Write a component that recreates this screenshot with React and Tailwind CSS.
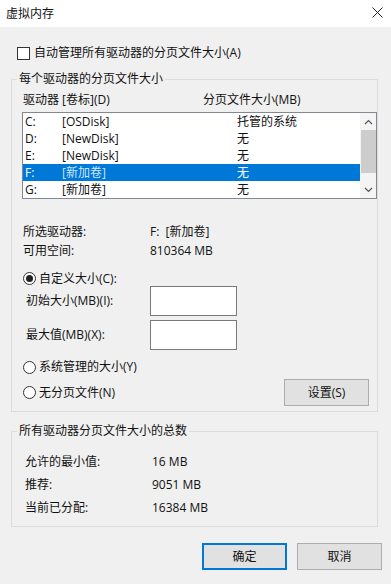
import React from 'react';

const drives = [
  { letter: 'C:', label: '[OSDisk]', size: '托管的系统' },
  { letter: 'D:', label: '[NewDisk]', size: '无' },
  { letter: 'E:', label: '[NewDisk]', size: '无' },
  { letter: 'F:', label: '[新加卷]', size: '无', selected: true },
  { letter: 'G:', label: '[新加卷]', size: '无' },
];

const Radio = ({ checked, label }) => (
  <div className="flex items-center h-[16px] ml-[1px]">
    <span className="w-[13px] h-[13px] rounded-full border border-[#333] bg-white flex items-center justify-center">
      {checked && <span className="w-[7px] h-[7px] rounded-full bg-[#222]" />}
    </span>
    <span className="ml-[3px]">{label}</span>
  </div>
);

const WinButton = ({ children, primary }) => (
  <button
    className={
      primary
        ? 'w-[85px] h-[27px] bg-[#e1e1e1] border-2 border-[#0078d7] flex items-center justify-center'
        : 'w-[85px] h-[27px] bg-[#e1e1e1] border border-[#adadad] flex items-center justify-center'
    }
  >
    {children}
  </button>
);

const App = () => {
  return (
    <div
      className="w-[391px] h-[584px] bg-[#f0f0f0] text-[12px] leading-[16px] text-[#111] overflow-hidden"
      style={{ fontFamily: '"Open Sans","Noto Sans CJK SC",sans-serif' }}
    >
      {/* title bar */}
      <div className="h-[27px] bg-white flex items-center justify-between pl-[6px] pr-[8px]">
        <span>虚拟内存</span>
        <svg width="11" height="11" viewBox="0 0 11 11" className="mt-[-2px]">
          <path d="M0.5 0.5 L10.5 10.5 M10.5 0.5 L0.5 10.5" stroke="#222" strokeWidth="1" fill="none" />
        </svg>
      </div>

      <div className="pl-[11px] pr-[13px]">
        {/* auto manage checkbox */}
        <div className="flex items-center h-[14px] mt-[19px] ml-[6px]">
          <span className="w-[13px] h-[13px] border border-[#333] bg-white" />
          <span className="ml-[4px]">自动管理所有驱动器的分页文件大小(A)</span>
        </div>

        {/* per-drive group */}
        <fieldset className="mt-[11px] border border-[#dcdcdc] pb-[5px] min-w-0">
          <legend className="ml-[5px] px-[2px] leading-[16px]">每个驱动器的分页文件大小</legend>
          <div className="pl-[10px]">
            <div className="flex mt-[5px] ml-[1px]">
              <span className="w-[180px]">驱动器 [卷标](D)</span>
              <span>分页文件大小(MB)</span>
            </div>

            <div className="mt-[4px] w-[355px] h-[87px] border border-[#828790] bg-white flex">
              <div className="flex-1">
                {drives.map((d) => (
                  <div
                    key={d.letter}
                    className={
                      d.selected
                        ? 'flex h-[17px] items-center bg-[#0078d7] text-white pl-[2px]'
                        : 'flex h-[17px] items-center pl-[2px]'
                    }
                  >
                    <span className="w-[37px]">{d.letter}</span>
                    <span className={d.selected ? 'w-[175px] text-[#cfe6ff]' : 'w-[175px]'}>{d.label}</span>
                    <span>{d.size}</span>
                  </div>
                ))}
              </div>
              <div className="w-[16px] bg-[#f4f4f4] flex flex-col items-center">
                <div className="h-[17px] flex items-center justify-center">
                  <svg width="9" height="6" viewBox="0 0 9 6">
                    <path d="M1 5 L4.5 1.5 L8 5" stroke="#555" strokeWidth="1.2" fill="none" />
                  </svg>
                </div>
                <div className="w-[15px] h-[43px] bg-[#cdcdcd]" />
                <div className="flex-1" />
                <div className="h-[17px] flex items-center justify-center">
                  <svg width="9" height="6" viewBox="0 0 9 6">
                    <path d="M1 1 L4.5 4.5 L8 1" stroke="#555" strokeWidth="1.2" fill="none" />
                  </svg>
                </div>
              </div>
            </div>

            <div className="mt-[23px] ml-[1px]">
              <div className="flex h-[19px] items-center">
                <span className="w-[127px]">所选驱动器:</span>
                <span>F:&nbsp;&nbsp;[新加卷]</span>
              </div>
              <div className="flex h-[19px] items-center">
                <span className="w-[127px]">可用空间:</span>
                <span>810364 MB</span>
              </div>
            </div>

            <div className="mt-[11px] h-[15px] flex items-center">
              <Radio checked label="自定义大小(C):" />
            </div>

            <div className="flex items-center h-[30px] ml-[4px]">
              <span className="w-[124px]">初始大小(MB)(I):</span>
              <div className="w-[87px] h-[30px] border border-[#7a7a7a] bg-white" />
            </div>
            <div className="flex items-center h-[30px] ml-[4px] mt-[4px]">
              <span className="w-[124px]">最大值(MB)(X):</span>
              <div className="w-[87px] h-[30px] border border-[#7a7a7a] bg-white" />
            </div>

            <div className="mt-[9px]">
              <Radio label="系统管理的大小(Y)" />
            </div>
            <div className="mt-[4px] flex items-center justify-between h-[27px] pr-[8px]">
              <Radio label="无分页文件(N)" />
              <WinButton>设置(S)</WinButton>
            </div>
          </div>
        </fieldset>

        {/* totals group */}
        <fieldset className="mt-[11px] border border-[#dcdcdc] pb-[7px] min-w-0">
          <legend className="ml-[5px] px-[2px] leading-[16px]">所有驱动器分页文件大小的总数</legend>
          <div className="pl-[13px] mt-[11px]">
            <div className="flex h-[23px] items-center">
              <span className="w-[127px]">允许的最小值:</span>
              <span>16 MB</span>
            </div>
            <div className="flex h-[23px] items-center">
              <span className="w-[127px]">推荐:</span>
              <span>9051 MB</span>
            </div>
            <div className="flex h-[23px] items-center">
              <span className="w-[127px]">当前已分配:</span>
              <span>16384 MB</span>
            </div>
          </div>
        </fieldset>
      </div>

      <div className="mt-[16px] flex justify-end gap-[10px] pr-[9px]">
        <WinButton primary>确定</WinButton>
        <WinButton>取消</WinButton>
      </div>
    </div>
  );
};

export default App;
